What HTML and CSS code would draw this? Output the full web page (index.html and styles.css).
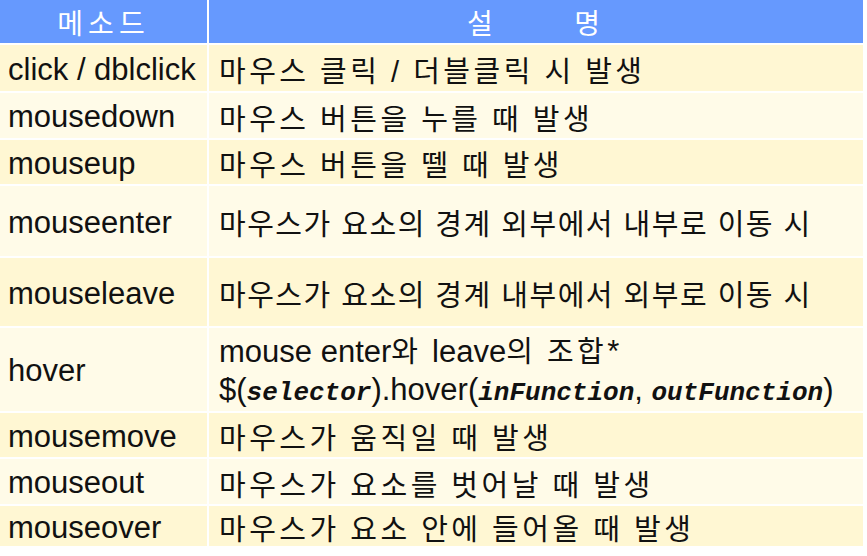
FILE: index.html
```html
<!DOCTYPE html>
<html lang="ko">
<head>
<meta charset="utf-8">
<title>마우스 이벤트</title>
<link rel="stylesheet" href="styles.css">
</head>
<body>
<div class="table">
  <div class="cell head name">메소드</div>
  <div class="cell head desc">설&nbsp;&nbsp;&nbsp;&nbsp;&nbsp;&nbsp;명</div>

  <div class="cell odd name">click / dblclick</div>
  <div class="cell odd desc">마우스 클릭 / 더블클릭 시 발생</div>

  <div class="cell even name">mousedown</div>
  <div class="cell even desc">마우스 버튼을 누를 때 발생</div>

  <div class="cell odd name">mouseup</div>
  <div class="cell odd desc">마우스 버튼을 뗄 때 발생</div>

  <div class="cell even name">mouseenter</div>
  <div class="cell even desc tight">마우스가 요소의 경계 외부에서 내부로 이동 시</div>

  <div class="cell odd name">mouseleave</div>
  <div class="cell odd desc tight">마우스가 요소의 경계 내부에서 외부로 이동 시</div>

  <div class="cell even name">hover</div>
  <div class="cell even desc multi">
    <div><span class="lat">mouse enter</span>와 <span class="lat">leave</span>의 조합<span class="lat">*</span></div>
    <div class="lat">$(<i class="code">selector</i>).hover(<i class="code">inFunction</i>, <i class="code">outFunction</i>)</div>
  </div>

  <div class="cell odd name">mousemove</div>
  <div class="cell odd desc">마우스가 움직일 때 발생</div>

  <div class="cell even name">mouseout</div>
  <div class="cell even desc">마우스가 요소를 벗어날 때 발생</div>

  <div class="cell odd name">mouseover</div>
  <div class="cell odd desc">마우스가 요소 안에 들어올 때 발생</div>
</div>
</body>
</html>
```

FILE: styles.css
```css
html, body {
  margin: 0;
  padding: 0;
  background: #ffffff;
}

.table {
  display: grid;
  grid-template-columns: 207px 654px;
  grid-template-rows: 43px 46px 45px 44px 70px 68px 83px 44px 45px 40px;
  gap: 2px;
  width: 863px;
  background: #ffffff;
  font-family: "Liberation Sans", "Noto Sans CJK KR", sans-serif;
  color: #111111;
}

.cell {
  display: flex;
  align-items: center;
  white-space: nowrap;
}

.name {
  padding-left: 8px;
  padding-top: 3px;
  font-size: 31px;
}

.desc {
  padding-left: 10px;
  padding-top: 2px;
  font-size: 29px;
  letter-spacing: 3.5px;
  word-spacing: -1px;
}

.desc.tight {
  letter-spacing: 1.5px;
  word-spacing: 0;
}

.head {
  background: #6699fe;
  color: #ffffff;
  justify-content: center;
  padding: 0;
  font-size: 28px;
  letter-spacing: 5px;
  word-spacing: 0;
}

.odd {
  background: #fff7d3;
}

.even {
  background: #fffbe8;
}

.multi {
  flex-direction: column;
  align-items: flex-start;
  justify-content: center;
  line-height: 38px;
  padding-top: 6px;
}

.lat {
  font-size: 31px;
  letter-spacing: 0;
  word-spacing: 0;
}

.code {
  font-family: "Liberation Mono", monospace;
  font-style: italic;
  font-weight: bold;
  font-size: 26px;
}
```
